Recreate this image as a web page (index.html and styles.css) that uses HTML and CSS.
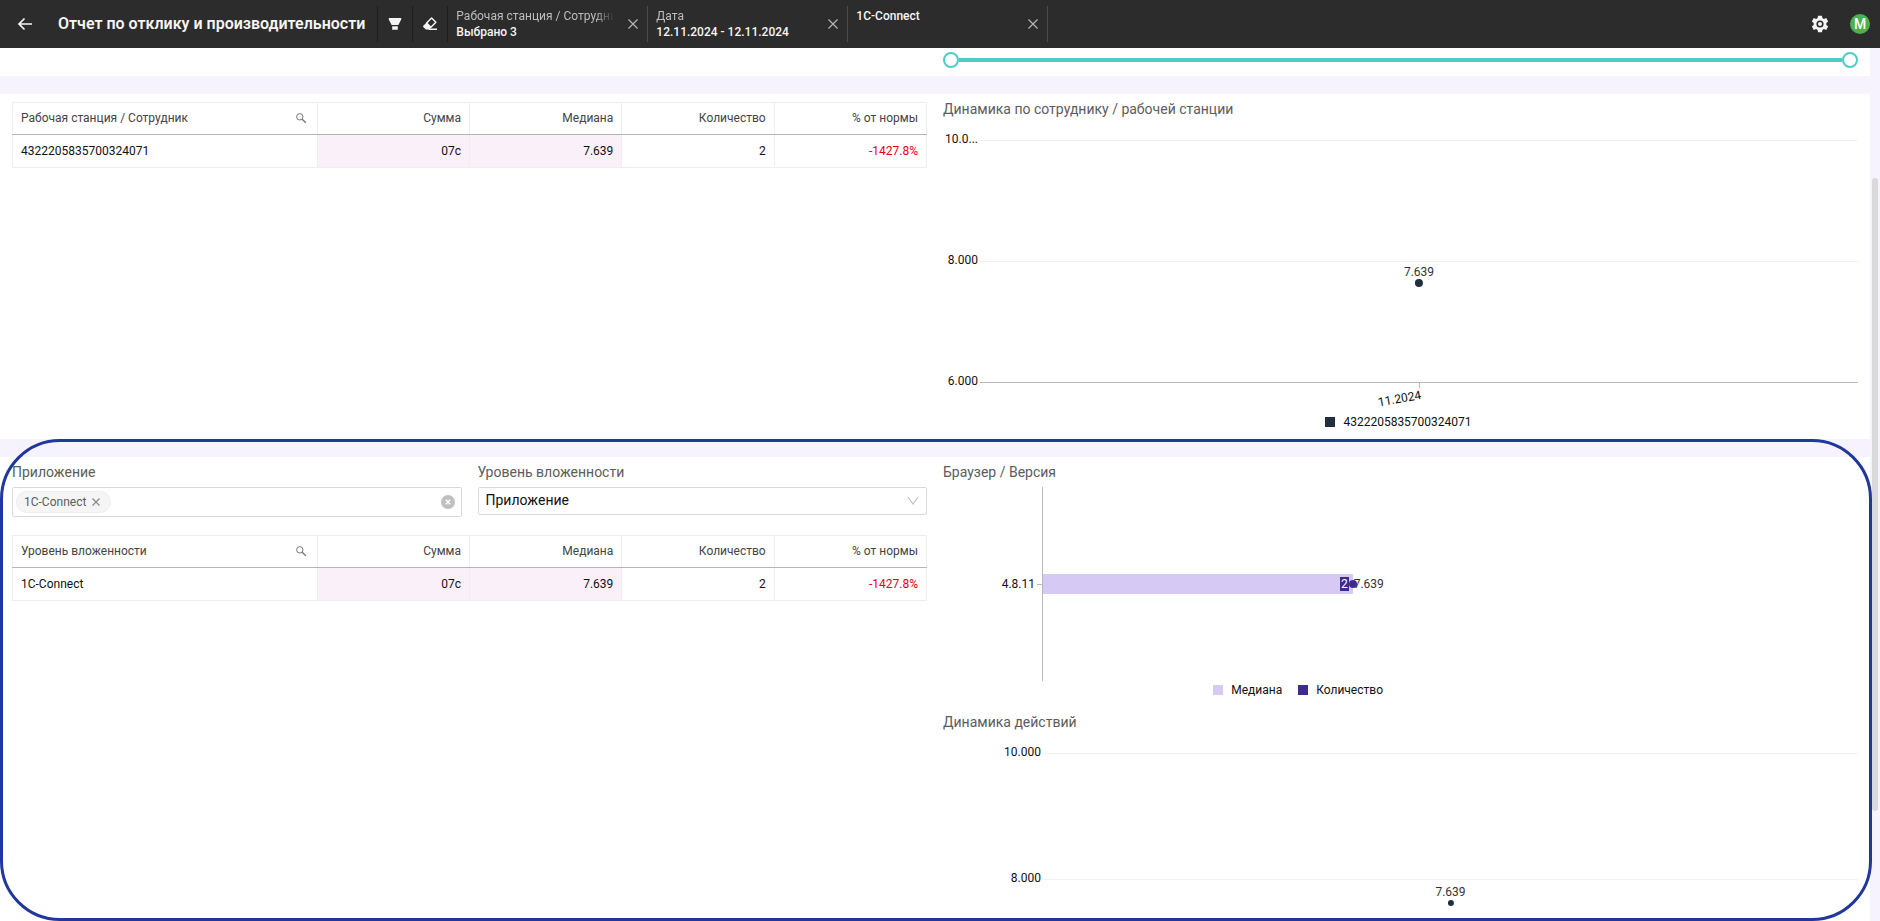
FILE: index.html
```html
<!DOCTYPE html>
<html lang="ru">
<head>
<meta charset="utf-8">
<title>Отчет по отклику и производительности</title>
<link rel="stylesheet" href="styles.css">
</head>
<body>
<header class="topbar">
  <button class="icon-btn back" aria-label="Назад"><svg width="16" height="16" viewBox="0 0 16 16"><path d="M15 8H2M7.500 2.500L2 8l5.500 5.500" fill="none" stroke="#f5f5f5" stroke-width="1.700"/></svg></button>
  <h1 class="page-title">Отчет по отклику и производительности</h1>
  <button class="icon-btn tool" aria-label="Фильтр"><svg width="14" height="14" viewBox="0 0 14 14"><path d="M.8 1h12.400v1.500L10.400 8H3.600L.8 2.500zM4.200 9.200h5.600v3.600H4.200z" fill="#f5f5f5"/></svg></button>
  <button class="icon-btn tool" aria-label="Очистить"><svg width="16" height="16" viewBox="0 0 16 16"><path d="M9.600 1.900l4.300 4.300-5 5-4.300-4.300z" fill="none" stroke="#f5f5f5" stroke-width="1.400" stroke-linejoin="round"/><path d="M4.600 6.400l4.800 4.800L7.100 13.500H3.900L1.300 10.900Q.7 10.300 1.300 9.700zM7.500 12.600h7.500v1.400H6.500z" fill="#f5f5f5"/></svg></button>
  <div class="chip"><div class="chip-text"><span class="chip-name">Рабочая станция / Сотрудник</span><b>Выбрано 3</b></div><button class="icon-btn" aria-label="Сбросить"><svg width="12" height="12" viewBox="0 0 12 12"><path d="M1.500 1.500l9 9M10.500 1.500l-9 9" stroke="#b5b5b5" stroke-width="1.200"/></svg></button></div>
  <div class="chip"><div class="chip-text"><span class="chip-name">Дата</span><b>12.11.2024 - 12.11.2024</b></div><button class="icon-btn" aria-label="Сбросить"><svg width="12" height="12" viewBox="0 0 12 12"><path d="M1.500 1.500l9 9M10.500 1.500l-9 9" stroke="#b5b5b5" stroke-width="1.200"/></svg></button></div>
  <div class="chip"><div class="chip-text"><b>1C-Connect</b></div><button class="icon-btn" aria-label="Сбросить"><svg width="12" height="12" viewBox="0 0 12 12"><path d="M1.500 1.500l9 9M10.500 1.500l-9 9" stroke="#b5b5b5" stroke-width="1.200"/></svg></button></div>
  <button class="icon-btn gear" aria-label="Настройки"><svg width="20" height="20" viewBox="0 0 24 24"><path fill="#f5f5f5" fill-rule="evenodd" d="M9.700 2h4.600l.6 2.900 1.700 1 2.900-1 2.300 4-2.200 2v2.200l2.200 2-2.300 4-2.900-1-1.700 1-.6 2.900H9.700l-.6-2.900-1.700-1-2.900 1-2.300-4 2.200-2v-2.200l-2.200-2 2.300-4 2.900 1 1.700-1zM12 7.700a4.300 4.300 0 1 0 0 8.600 4.300 4.300 0 0 0 0-8.600zm0 1.900a2.400 2.400 0 1 1 0 4.800 2.400 2.400 0 0 1 0-4.800z"/></svg></button>
  <button class="avatar">M</button>
</header>

<main class="report">
  <section class="panel split range-panel">
    <div class="range"><span class="knob"></span><span class="track"></span><span class="knob"></span></div>
  </section>

  <section class="panel split staff-panel">
    <div class="table-wrap">
      <table class="grid">
        <thead><tr><th><span class="th-search">Рабочая станция / Сотрудник<svg width="12" height="12" viewBox="0 0 12 12"><circle cx="4.800" cy="4.800" r="3.200" fill="none" stroke="#777"/><path d="M7.200 7.200l3.600 3.600" stroke="#777" stroke-width="1.400"/></svg></span></th><th>Сумма</th><th>Медиана</th><th>Количество</th><th>% от нормы</th></tr></thead>
        <tbody><tr><td>4322205835700324071</td><td class="tint">07с</td><td class="tint">7.639</td><td>2</td><td class="bad">-1427.8%</td></tr></tbody>
      </table>
    </div>
    <div>
      <h2 class="label">Динамика по сотруднику / рабочей станции</h2>
      <div class="plot staff-plot">
        <div class="tick-row"><span>10.0...</span></div>
        <div class="tick-row"><span>8.000</span></div>
        <div class="tick-row base"><span>6.000</span></div>
        <div class="points"><div class="point" style="left:50%;top:60.5%"><span>7.639</span><i></i></div><div class="x-tick"><span>11.2024</span></div></div>
      </div>
      <div class="legend staff-legend"><span class="key dark">4322205835700324071</span></div>
    </div>
  </section>

  <div class="app-area">
  <section class="panel split">
    <div>
      <div class="filters">
        <div class="field">
          <label class="label" for="app">Приложение</label>
          <div class="tag-box"><span class="tag">1C-Connect<button class="icon-btn" aria-label="Удалить"><svg width="10" height="10" viewBox="0 0 10 10"><path d="M1.500 1.500l7 7M8.500 1.500l-7 7" stroke="#888" stroke-width="1.200"/></svg></button></span><input id="app" type="text"><button class="icon-btn" aria-label="Очистить"><svg width="14" height="14" viewBox="0 0 14 14"><circle cx="7" cy="7" r="7" fill="#bfbfbf"/><path d="M4.800 4.800l4.400 4.400M9.200 4.800L4.800 9.200" stroke="#fff" stroke-width="1.500"/></svg></button></div>
        </div>
        <div class="field">
          <label class="label" for="level">Уровень вложенности</label>
          <div class="select-box"><select id="level"><option>Приложение</option></select><svg width="12" height="10" viewBox="0 0 12 10"><path d="M1 1l5 7 5-7" fill="none" stroke="#bfbfbf" stroke-width="1.200"/></svg></div>
        </div>
      </div>
      <table class="grid">
        <thead><tr><th><span class="th-search">Уровень вложенности<svg width="12" height="12" viewBox="0 0 12 12"><circle cx="4.800" cy="4.800" r="3.200" fill="none" stroke="#777"/><path d="M7.200 7.200l3.600 3.600" stroke="#777" stroke-width="1.400"/></svg></span></th><th>Сумма</th><th>Медиана</th><th>Количество</th><th>% от нормы</th></tr></thead>
        <tbody><tr><td>1C-Connect</td><td class="tint">07с</td><td class="tint">7.639</td><td>2</td><td class="bad">-1427.8%</td></tr></tbody>
      </table>
    </div>
    <div>
      <h2 class="label">Браузер / Версия</h2>
      <div class="bars"><span class="bar-name">4.8.11</span><div class="bar-area"><div class="bar" style="width:38%"><span class="count">2</span><i></i></div><span class="bar-value">7.639</span></div></div>
      <div class="legend bar-legend"><span class="key light">Медиана</span><span class="key violet">Количество</span></div>
      <h2 class="label">Динамика действий</h2>
      <div class="plot action-plot">
        <div class="tick-row"><span>10.000</span></div>
        <div class="tick-row"><span>8.000</span></div>
        <div class="tick-row base"></div>
        <div class="points"><div class="point small" style="left:50%;top:60.5%"><span>7.639</span><i></i></div></div>
      </div>
    </div>
  </section>
  <div class="highlight"></div>
  </div>
  <div class="scroll-thumb"></div>
</main>
</body>
</html>
```

FILE: styles.css
```css
* { box-sizing: border-box; }

body {
  margin: 0;
  height: 100vh;
  display: flex;
  flex-direction: column;
  overflow: hidden;
  background: #f6f3ff;
  color: #111;
  font: 12px/16px Roboto, "Liberation Sans", sans-serif;
}

button, input, select { font: inherit; color: inherit; border: 0; padding: 0; background: none; }
svg { display: block; flex: none; }

.topbar {
  flex: none;
  display: flex;
  align-items: center;
  height: 48px;
  padding: 0 10px 0 8px;
  background: #2c2c2c;
  color: #f5f5f5;
}
.icon-btn { display: flex; align-items: center; justify-content: center; flex: none; }
.back { width: 34px; height: 36px; }
.page-title { margin: 0 12px 0 16px; font-size: 16px; line-height: 20px; font-weight: 600; white-space: nowrap; }
.tool { width: 35px; height: 36px; border-left: 1px solid #1c1c1c; }
.chip {
  display: flex;
  align-items: center;
  justify-content: space-between;
  width: 200px;
  height: 36px;
  padding: 0 8px;
  border-right: 1px solid #4c4c4c;
}
.tool + .chip { width: 201px; border-left: 1px solid #1c1c1c; }
.chip-text { display: flex; flex-direction: column; width: 158px; height: 32px; overflow: hidden; white-space: nowrap; }
.chip-text b { font-weight: 500; }
.chip-name { color: #bdbdbd; overflow: hidden; mask-image: linear-gradient(to right, #000 88%, transparent); }
.gear { margin-left: auto; width: 20px; height: 20px; }
.avatar { width: 20px; height: 20px; margin-left: 20px; border-radius: 50%; background: #4caf50; color: #fff; font-size: 14px; line-height: 20px; font-weight: 500; }

.report { position: relative; flex: 1; min-height: 0; display: flex; flex-direction: column; padding-right: 10px; overflow: hidden; }
.panel { background: #fff; padding: 8px 12px; }
.split { display: grid; grid-template-columns: minmax(0, 1fr) minmax(0, 1fr); gap: 16px; align-items: start; }
.range-panel { flex: none; padding-top: 4px; padding-bottom: 8px; }
.range { grid-column: 2; display: flex; align-items: center; }
.knob { width: 16px; height: 16px; border: 2px solid #4ecdc4; border-radius: 50%; }
.track { flex: 1; height: 4px; background: #4ecdc4; }

.staff-panel { flex: none; margin-top: 18px; padding-top: 6px; padding-bottom: 9px; }
.table-wrap { padding-top: 2px; }
.label { display: block; margin: 0; color: #5c5c5c; font-size: 14px; line-height: 18px; font-weight: 400; }

.grid { width: 100%; table-layout: fixed; border-collapse: collapse; }
.grid th, .grid td { height: 32px; padding: 0 8px; border: 1px solid #eee; text-align: right; font-weight: 400; }
.grid td { height: 33px; padding-bottom: 1px; }
.grid th { padding-bottom: 1px; color: #444; border-bottom: 1px solid #b5b5b5; }
.grid th:first-child, .grid td:first-child { width: 33.33%; text-align: left; }
.grid .tint { background: #faf0fa; }
.grid .bad { color: #e60012; }
.th-search { display: flex; align-items: center; justify-content: space-between; padding-right: 2px; }

.plot { position: relative; display: flex; flex-direction: column; justify-content: space-between; margin-left: 37px; }
.tick-row { position: relative; height: 1px; background: #f0f0f0; }
.tick-row span { position: absolute; right: 100%; top: -9px; margin-right: 2px; white-space: nowrap; }
.tick-row.base { background: #b8b8b8; }
.points { position: absolute; inset: 0; }
.point { position: absolute; display: flex; flex-direction: column; align-items: center; transform: translate(-50%, -100%); color: #333; }
.point i { width: 8px; height: 8px; margin-top: -1px; border-radius: 50%; background: #222f3e; }
.point.small i { width: 6px; height: 6px; margin-top: 0; }
.x-tick { position: absolute; left: 50%; top: 100%; width: 1px; height: 5px; background: #b8b8b8; }
.x-tick span { position: absolute; right: 0; top: 4px; transform: rotate(-10deg); transform-origin: right top; }
.staff-plot { height: 243px; margin-top: 22px; }
.action-plot { height: 253px; margin: 22px 0 40px 100px; }

.legend { display: flex; justify-content: center; gap: 16px; }
.key { display: flex; align-items: center; gap: 8px; }
.key::before { content: ""; width: 10px; height: 10px; }
.dark::before { background: #222f3e; }
.light::before { background: #d6caf4; }
.violet::before { background: #3f2a93; }
.staff-legend { margin-top: 31px; padding-right: 4px; }

.app-area { position: relative; flex: 1; min-height: 0; padding-top: 18px; }
.app-area > .panel { height: 100%; overflow: hidden; padding-top: 6px; padding-bottom: 0; }
.highlight { position: absolute; inset: 0 -2px 0 0; border: 3px solid #20389b; border-radius: 60px; pointer-events: none; }

.filters { display: grid; grid-template-columns: minmax(0, 1fr) minmax(0, 1fr); gap: 16px; align-items: start; margin-bottom: 18px; }
.field { display: grid; gap: 6px; }
.tag-box, .select-box { position: relative; display: flex; align-items: center; border: 1px solid #d9d9d9; border-radius: 2px; }
.tag-box { height: 30px; padding: 0 6px 0 3px; }
.tag-box input { flex: 1; min-width: 0; outline: 0; }
.tag { display: flex; align-items: center; gap: 5px; height: 22px; padding: 0 9px 0 7px; border: 1px solid #eee; border-radius: 11px; background: #f5f5f5; color: #5c5c5c; }
.select-box { height: 28px; }
.select-box select { flex: 1; height: 26px; padding: 0 0 2px 7px; appearance: none; font-size: 14px; }
.select-box svg { position: absolute; right: 7px; pointer-events: none; }

.bars { display: flex; align-items: center; height: 194px; margin: 6px 0 1px; }
.bar-name { width: 92px; text-align: right; }
.bar-area { flex: 1; align-self: stretch; display: flex; align-items: center; margin-left: 7px; border-left: 1px solid #b8b8b8; position: relative; }
.bar-area::before { content: ""; position: absolute; right: 100%; top: 50%; width: 6px; height: 1px; background: #b8b8b8; }
.bar { position: relative; display: flex; align-items: center; justify-content: flex-end; height: 20px; padding-right: 4px; background: #d6caf4; }
.bar i { position: absolute; right: -4px; width: 8px; height: 8px; border-radius: 50%; background: #3f2a93; }
.count { padding: 0 1px; line-height: 14px; background: #3f2a93; color: #fff; }
.bar-value { margin-left: 1px; color: #333; }
.bar-legend { width: 440px; justify-content: flex-end; margin-bottom: 15px; }

.scroll-thumb { position: absolute; right: 2px; top: 130px; width: 6px; height: 633px; border-radius: 3px; background: #d9d9d9; }
```
